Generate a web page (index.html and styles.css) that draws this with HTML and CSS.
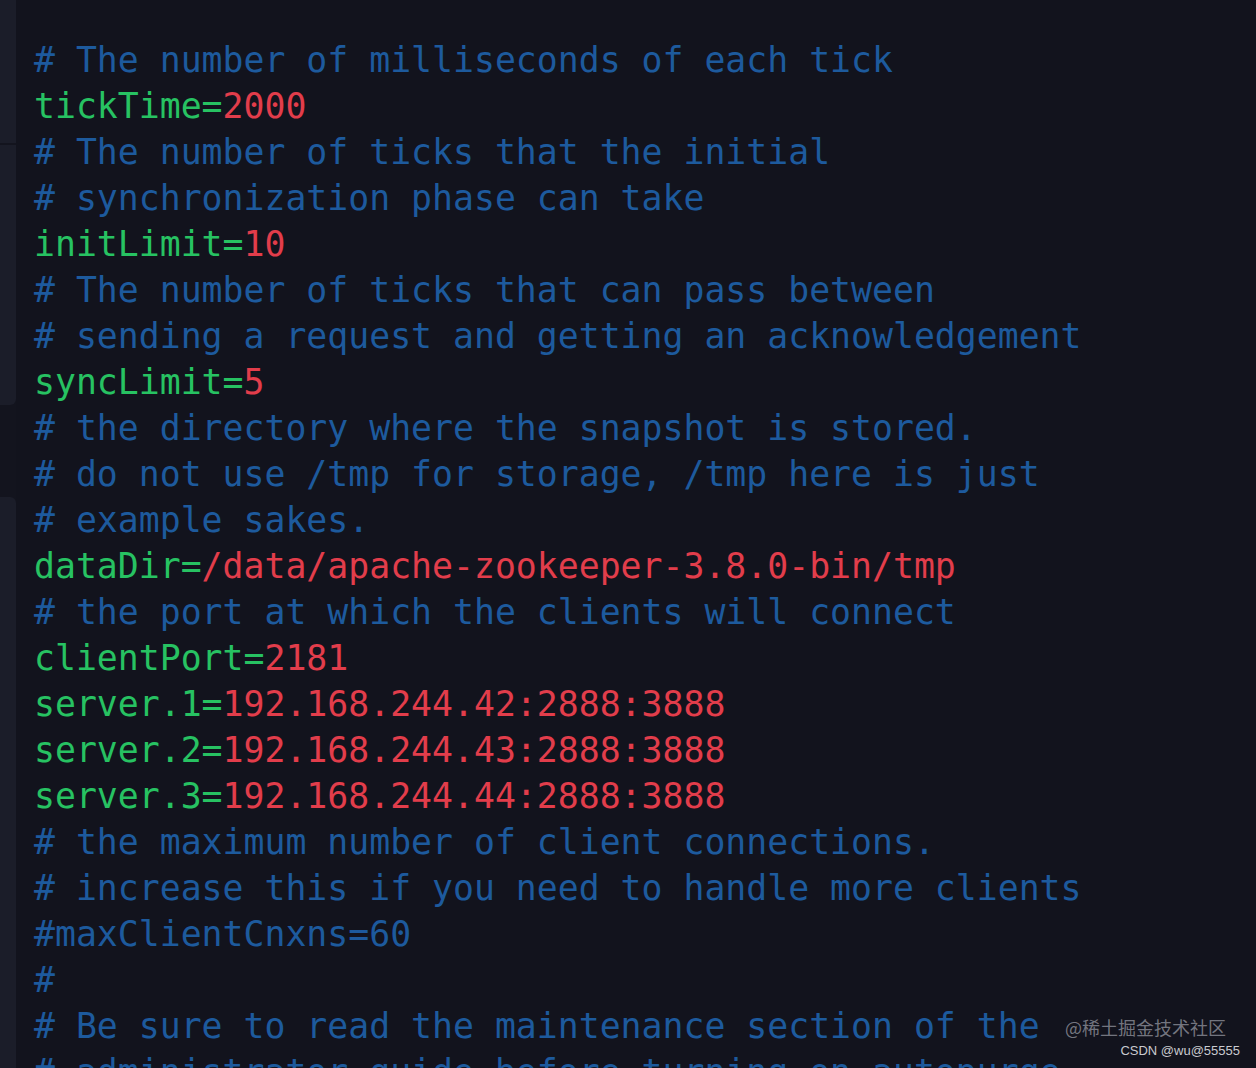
FILE: index.html
```html
<!DOCTYPE html>
<html lang="en">
<head>
<meta charset="utf-8">
<link rel="stylesheet" href="styles.css">
</head>
<body>
<div class="editor">
  <div class="gutter">
    <div class="seg seg-a"></div>
    <div class="seg seg-b"></div>
    <div class="seg-gap"></div>
    <div class="seg seg-c"></div>
  </div>
  <pre class="code"><span class="c"># The number of milliseconds of each tick</span>
<span class="k">tickTime=</span><span class="v">2000</span>
<span class="c"># The number of ticks that the initial</span>
<span class="c"># synchronization phase can take</span>
<span class="k">initLimit=</span><span class="v">10</span>
<span class="c"># The number of ticks that can pass between</span>
<span class="c"># sending a request and getting an acknowledgement</span>
<span class="k">syncLimit=</span><span class="v">5</span>
<span class="c"># the directory where the snapshot is stored.</span>
<span class="c"># do not use /tmp for storage, /tmp here is just</span>
<span class="c"># example sakes.</span>
<span class="k">dataDir=</span><span class="v">/data/apache-zookeeper-3.8.0-bin/tmp</span>
<span class="c"># the port at which the clients will connect</span>
<span class="k">clientPort=</span><span class="v">2181</span>
<span class="k">server.1=</span><span class="v">192.168.244.42:2888:3888</span>
<span class="k">server.2=</span><span class="v">192.168.244.43:2888:3888</span>
<span class="k">server.3=</span><span class="v">192.168.244.44:2888:3888</span>
<span class="c"># the maximum number of client connections.</span>
<span class="c"># increase this if you need to handle more clients</span>
<span class="c">#maxClientCnxns=60</span>
<span class="c">#</span>
<span class="c"># Be sure to read the maintenance section of the</span>
<span class="c"># administrator guide before turning on autopurge.</span></pre>
</div>
<div class="watermark">
  <div class="wm-juejin">@稀土掘金技术社区</div>
  <div class="wm-csdn">CSDN @wu@55555</div>
</div>
</body>
</html>
```

FILE: styles.css
```css
html, body {
  margin: 0;
  padding: 0;
  background: #12131d;
  height: 1068px;
  overflow: hidden;
}

.editor {
  display: flex;
  height: 1068px;
}

.gutter {
  width: 16px;
  flex: none;
  display: flex;
  flex-direction: column;
  background: #13141e;
}

.seg {
  background: #1b1d29;
}

.seg-a {
  height: 143px;
  margin-bottom: 2px;
}

.seg-b {
  height: 260px;
  border-bottom-right-radius: 6px;
}

.seg-gap {
  height: 92px;
}

.seg-c {
  flex: 1;
  border-top-right-radius: 6px;
}

.code {
  margin: 0;
  padding: 37px 0 0 18px;
  font-family: "DejaVu Sans Mono", "Liberation Mono", monospace;
  font-size: 34.8px;
  line-height: 46px;
  color: #1e5b9e;
  white-space: pre;
}

.c { color: #1d5a9d; }
.k { color: #27c262; }
.v { color: #e23d4b; }

.watermark {
  position: absolute;
  right: 16px;
  bottom: 8px;
  text-align: right;
  font-family: "Liberation Sans", "Noto Sans CJK SC", sans-serif;
}

.wm-juejin {
  font-family: "Noto Sans CJK SC", "Liberation Sans", sans-serif;
  font-size: 18px;
  line-height: 24px;
  color: rgba(160, 162, 172, 0.7);
  margin-right: 14px;
  margin-bottom: 3px;
}

.wm-csdn {
  font-size: 13px;
  line-height: 18px;
  color: #c9cacf;
}
```
